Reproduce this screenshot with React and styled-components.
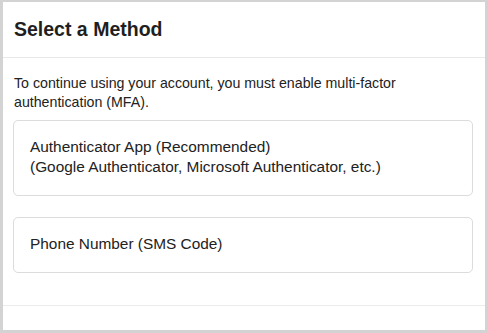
import React from 'react';
import styled, {createGlobalStyle} from "styled-components";

const GlobalStyle = createGlobalStyle`
  html, body {
    margin: 0;
    padding: 0;
    background: #fff;
  }
  body {
    font-family: "Liberation Sans", Arial, sans-serif;
    color: #222;
  }
`

const Frame = styled.div`
  width: 488px;
  height: 333px;
  box-sizing: border-box;
  border: 3px solid #d3d3d3;
  border-top-width: 2px;
  background: #fff;
  display: flex;
  flex-direction: column;
`

const Header = styled.div`
  height: 55px;
  flex-shrink: 0;
  display: flex;
  align-items: center;
  padding: 0 11px;
  border-bottom: 1px solid #e8e8e8;
`

const Title = styled.h2`
  margin: 0;
  font-size: 19.5px;
  font-weight: 700;
  color: #1f1f1f;
`

const Body = styled.div`
  flex: 1;
  padding: 16px 12px 0 10px;
`

const Intro = styled.p`
  margin: 0 0 8px 1px;
  font-size: 14.2px;
  line-height: 19px;
  color: #222;
`

const OptionList = styled.div`
  display: flex;
  flex-direction: column;
  gap: 21px;
`

const OptionCard = styled.button`
  display: block;
  width: 100%;
  text-align: left;
  background: #fff;
  border: 1px solid #dcdcdc;
  border-radius: 5px;
  padding: 16px 16px 18px;
  font-family: inherit;
  font-size: 15.4px;
  line-height: 20px;
  color: #222;
  cursor: pointer;
`

const Footer = styled.div`
  height: 24px;
  flex-shrink: 0;
  border-top: 1px solid #ebebeb;
`

const options = [
    {id: 'app', lines: ['Authenticator App (Recommended)', '(Google Authenticator, Microsoft Authenticator, etc.)']},
    {id: 'sms', lines: ['Phone Number (SMS Code)']},
]

const App = () => {
    return <>
        <GlobalStyle/>
        <Frame>
            <Header>
                <Title>Select a Method</Title>
            </Header>
            <Body>
                <Intro>To continue using your account, you must enable multi-factor authentication (MFA).</Intro>
                <OptionList>
                    {options.map(o =>
                        <OptionCard key={o.id}>
                            {o.lines.map((l, i) => <div key={i}>{l}</div>)}
                        </OptionCard>
                    )}
                </OptionList>
            </Body>
            <Footer/>
        </Frame>
    </>
}

export default App;
